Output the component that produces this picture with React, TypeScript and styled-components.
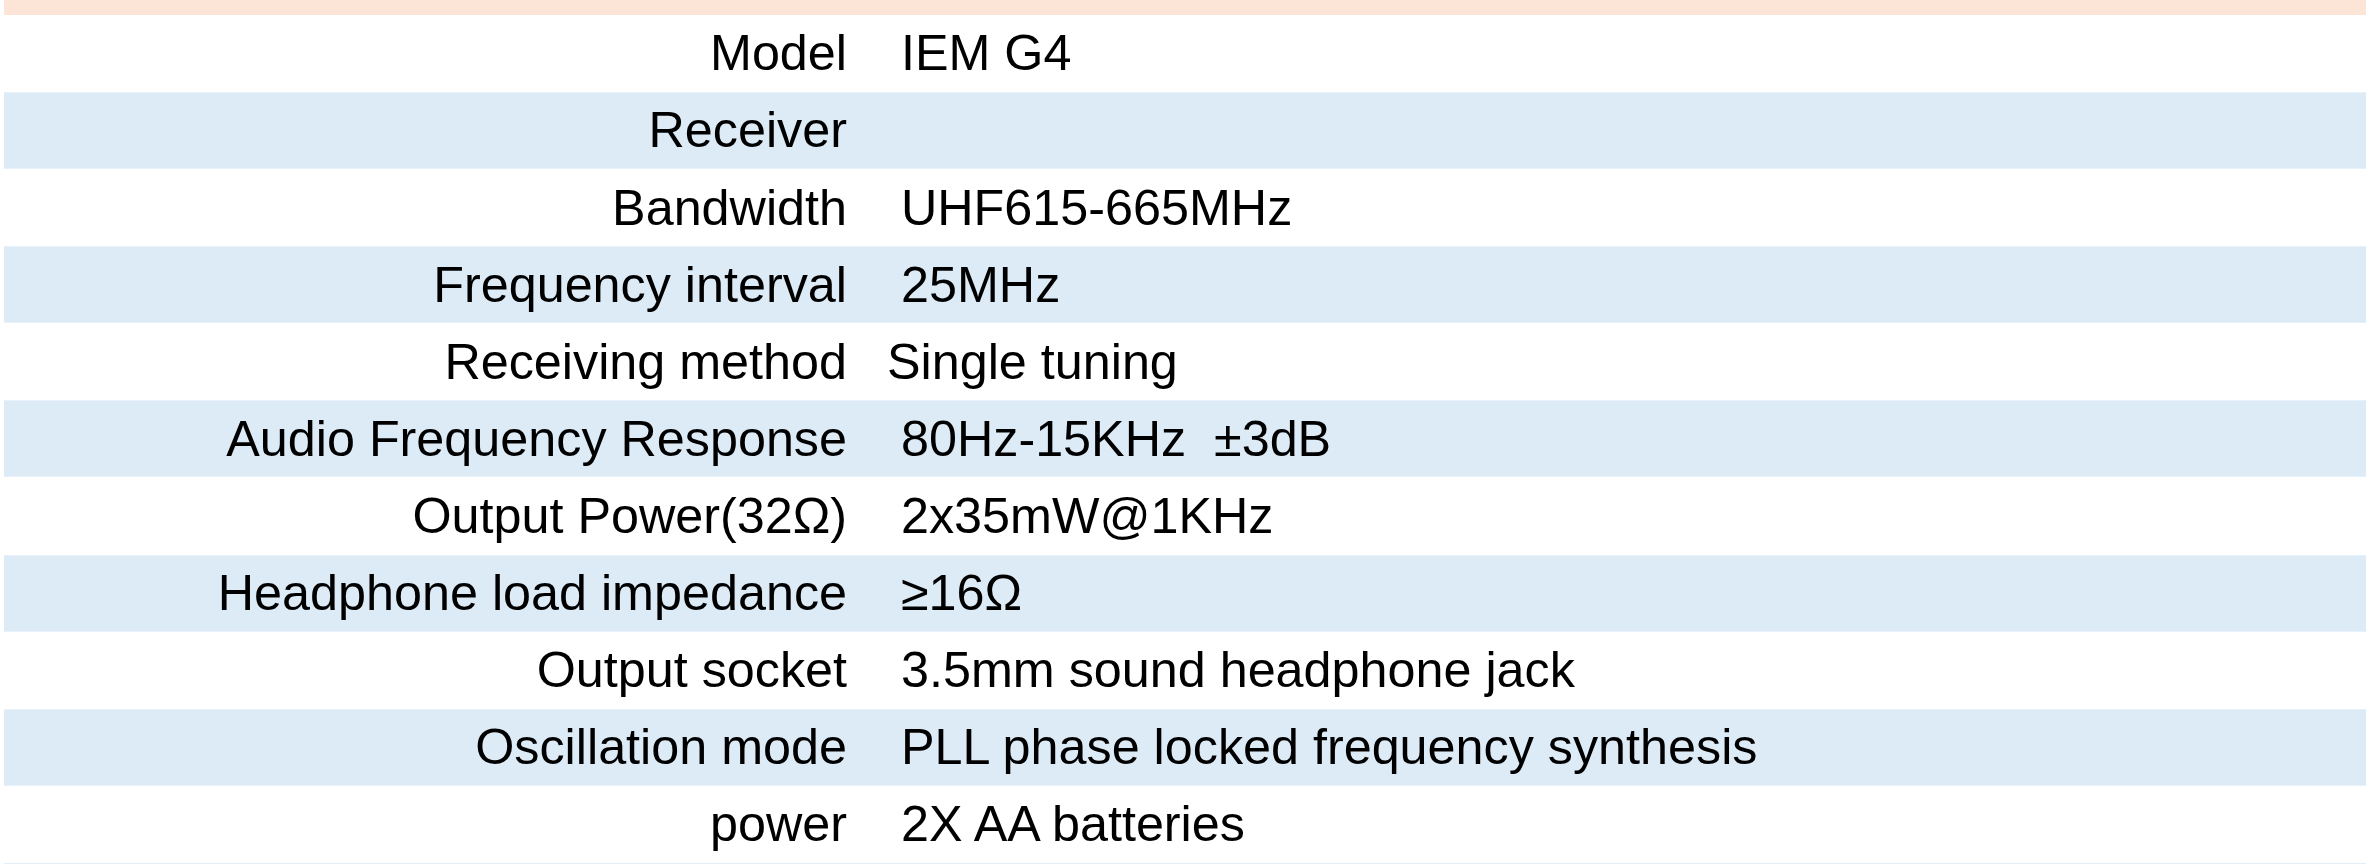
import React from "react";
import styled, { createGlobalStyle } from "styled-components";

const Global = createGlobalStyle`
  html, body { margin: 0; padding: 0; background: #ffffff; }
  body { font-family: "Liberation Sans", Arial, sans-serif; }
`;

const Page = styled.div`
  width: 2366px;
  height: 864px;
  padding-left: 4px;
  box-sizing: border-box;
  overflow: hidden;
  display: flex;
  flex-direction: column;
`;

const HeaderBand = styled.div`
  height: 15px;
  background: #fce4d6;
  flex: none;
`;

const Table = styled.div`
  display: grid;
  grid-template-columns: 843px 1fr;
  grid-auto-rows: 77.09px;
  border-bottom: 1px solid #e4eef9;
`;

const Cell = styled.div<{ $shaded: boolean }>`
  display: flex;
  align-items: center;
  background: ${(p) => (p.$shaded ? "#ddebf7" : "#ffffff")};
  box-shadow: ${(p) =>
    p.$shaded ? "inset 0 1px 0 #e8f1fa, inset 0 -1px 0 #e8f1fa" : "none"};
  font-size: 50.3px;
  color: #000;
  white-space: pre;
  line-height: 1;
`;

const Label = styled(Cell)`
  justify-content: flex-end;
`;

const Value = styled(Cell)`
  padding-left: 40px;
`;

const rows: [string, string][] = [
  ["Model", " IEM G4"],
  ["Receiver", ""],
  ["Bandwidth", " UHF615-665MHz"],
  ["Frequency interval", " 25MHz"],
  ["Receiving method", "Single tuning"],
  ["Audio Frequency Response", " 80Hz-15KHz  \u00b13dB"],
  ["Output Power(32\u03a9)", " 2x35mW@1KHz"],
  ["Headphone load impedance", " \u226516\u03a9"],
  ["Output socket", " 3.5mm sound headphone jack"],
  ["Oscillation mode", " PLL phase locked frequency synthesis"],
  ["power", " 2X AA batteries"],
];

export default function App() {
  return (
    <>
      <Global />
      <Page>
        <HeaderBand />
        <Table>
          {rows.map(([label, value], i) => (
            <React.Fragment key={label}>
              <Label $shaded={i % 2 === 1}>{label}</Label>
              <Value $shaded={i % 2 === 1}>{value}</Value>
            </React.Fragment>
          ))}
        </Table>
      </Page>
    </>
  );
}
